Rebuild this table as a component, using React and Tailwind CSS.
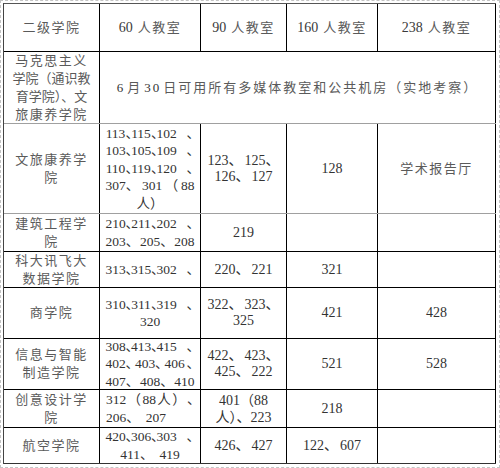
import React from "react";

const N = ({ children }) => <span className="inline-block w-[20px] text-center">{children}</span>;
const Cm = () => <span className="tracking-[-8px]">、</span>;
const Md = () => <span className="tracking-[-4px]">、</span>;
const End = () => <span className="inline-block w-[8px] tracking-[-5.5px]">、</span>;
const Sep = () => <span className="mr-[2px]">、</span>;

const L2 = ({ children }) => (
  <div className="w-[89px] flex justify-between items-baseline whitespace-nowrap">{children}</div>
);

const G = ({ a, b, c, m }) => (
  <L2>
    <span className="whitespace-nowrap">
      <N>{a}</N>{m ? <Md /> : <Cm />}<N>{b}</N>{m ? <Md /> : <Cm />}<N>{c}</N>
    </span>
    <End />
  </L2>
);

const Zh = ({ children }) => (
  <span className="text-[13px] tracking-[1.5px] text-[#5a5a5a]">{children}</span>
);

const c1 = "w-[96px] shrink-0 border-r border-black flex flex-col items-center justify-center text-[13px] leading-[18px] tracking-[1.5px] text-[#5a5a5a] whitespace-nowrap";
const c2 = "w-[101px] shrink-0 border-r border-black flex flex-col items-center justify-center text-[13.5px] leading-[17.5px] text-[#333]";
const c3 = "w-[86px] shrink-0 border-r border-black flex flex-col items-center justify-center text-[14px] leading-[16px] text-[#333] whitespace-nowrap";
const c4 = "w-[91px] shrink-0 border-r border-black flex flex-col items-center justify-center text-[14px] leading-[16px] text-[#333] whitespace-nowrap";
const c5 = "w-[118px] shrink-0 border-r border-black flex flex-col items-center justify-center text-[14px] leading-[16px] text-[#333] whitespace-nowrap";

export default function App() {
  return (
    <div className="w-[500px] h-[468px] bg-white border border-dashed border-[#c4c4c4] p-[2px] font-['Liberation_Serif','Noto_Sans_CJK_SC',serif]">
      <div className="w-[493px] border-l border-t border-l-[#444] border-t-[#555] flex flex-col">
        {/* header */}
        <div className="flex h-[48px] border-b border-black">
          <div className={c1}>二级学院</div>
          <div className={c2}>
            <div className="flex items-baseline whitespace-nowrap"><span className="text-[14px] text-[#3a3a3a]">60</span><span className="ml-[5px]"><Zh>人教室</Zh></span></div>
          </div>
          <div className={c3}>
            <div className="flex items-baseline whitespace-nowrap"><span className="text-[#3a3a3a]">90</span><span className="ml-[5px]"><Zh>人教室</Zh></span></div>
          </div>
          <div className={c4}>
            <div className="flex items-baseline whitespace-nowrap"><span className="text-[#3a3a3a]">160</span><span className="ml-[5px]"><Zh>人教室</Zh></span></div>
          </div>
          <div className={c5}>
            <div className="flex items-baseline whitespace-nowrap"><span className="text-[#3a3a3a]">238</span><span className="ml-[5px]"><Zh>人教室</Zh></span></div>
          </div>
        </div>

        {/* 马克思主义学院 */}
        <div className="flex h-[72px] border-b border-[#a0a0a0]">
          <div className={c1}>
            <div>马克思主义</div>
            <div className="tracking-[0px]">学院（通识教</div>
            <div className="tracking-[0px]">育学院）、文</div>
            <div>旅康养学院</div>
          </div>
          <div className="w-[396px] shrink-0 border-r border-black flex items-center justify-center text-[13px] tracking-[2px] text-[#5a5a5a] whitespace-nowrap">
            <span className="text-[#333]">6</span>
            <span className="ml-[2px]">月</span>
            <span className="ml-[2px] text-[#333]">30</span>
            <span className="ml-[2px]">日可用所有多媒体教室和公共机房（实地考察）</span>
          </div>
        </div>

        {/* 文旅康养学院 */}
        <div className="flex h-[90px] border-b border-[#a0a0a0]">
          <div className={c1}>
            <div>文旅康养学</div>
            <div>院</div>
          </div>
          <div className={c2}>
            <G a="113" b="115" c="102" />
            <G a="103" b="105" c="109" />
            <G a="110" b="119" c="120" />
            <L2><span>307、</span><span>301</span><span>（</span><span>88</span></L2>
            <div className="whitespace-nowrap">人）</div>
          </div>
          <div className={c3}>
            <div>123<Sep />125、</div>
            <div>126<Sep />127</div>
          </div>
          <div className={c4}>128</div>
          <div className={c5}><Zh>学术报告厅</Zh></div>
        </div>

        {/* 建筑工程学院 */}
        <div className="flex h-[38px] border-b border-black">
          <div className={c1}>
            <div>建筑工程学</div>
            <div>院</div>
          </div>
          <div className={c2}>
            <G a="210" b="211" c="202" />
            <L2><span>203、</span><span>205、</span><span>208</span></L2>
          </div>
          <div className={c3}>219</div>
          <div className={c4}></div>
          <div className={c5}></div>
        </div>

        {/* 科大讯飞大数据学院 */}
        <div className="flex h-[36px] border-b border-black">
          <div className={c1 + " leading-[16.5px]"}>
            <div>科大讯飞大</div>
            <div>数据学院</div>
          </div>
          <div className={c2}>
            <G a="313" b="315" c="302" />
          </div>
          <div className={c3}>
            <div>220<Sep />221</div>
          </div>
          <div className={c4}>321</div>
          <div className={c5}></div>
        </div>

        {/* 商学院 */}
        <div className="flex h-[51px] border-b border-black">
          <div className={c1}>商学院</div>
          <div className={c2}>
            <G a="310" b="311" c="319" />
            <div className="whitespace-nowrap">320</div>
          </div>
          <div className={c3}>
            <div>322<Sep />323、</div>
            <div>325</div>
          </div>
          <div className={c4}>421</div>
          <div className={c5}>428</div>
        </div>

        {/* 信息与智能制造学院 */}
        <div className="flex h-[51px] border-b border-black">
          <div className={c1 + " leading-[17px]"}>
            <div>信息与智能</div>
            <div>制造学院</div>
          </div>
          <div className={c2}>
            <G a="308" b="413" c="415" />
            <G a="402" b="403" c="406" m />
            <L2><span>407、</span><span>408、</span><span>410</span></L2>
          </div>
          <div className={c3}>
            <div>422<Sep />423、</div>
            <div>425<Sep />222</div>
          </div>
          <div className={c4}>521</div>
          <div className={c5}>528</div>
        </div>

        {/* 创意设计学院 */}
        <div className="flex h-[38px] border-b border-black">
          <div className={c1}>
            <div>创意设计学</div>
            <div>院</div>
          </div>
          <div className="w-[101px] shrink-0 border-r border-black flex flex-col items-start justify-center pl-[6px] text-[13.5px] leading-[17.5px] text-[#333]">
            <L2><span>312</span><span>（</span><span>88</span><span>人</span><span>）</span><End /></L2>
            <div className="whitespace-nowrap">206、<span className="ml-[6px]">207</span></div>
          </div>
          <div className={c3 + " leading-[17px]"}>
            <div>401（88</div>
            <div>人）、223</div>
          </div>
          <div className={c4}>218</div>
          <div className={c5}></div>
        </div>

        {/* 航空学院 */}
        <div className="flex h-[36px] border-b border-[#333]">
          <div className={c1}>航空学院</div>
          <div className={c2}>
            <G a="420" b="306" c="303" />
            <div className="whitespace-nowrap">411、<span className="ml-[6px]">419</span></div>
          </div>
          <div className={c3}>
            <div>426<Sep />427</div>
          </div>
          <div className={c4}>
            <div>122<Sep />607</div>
          </div>
          <div className={c5}></div>
        </div>
      </div>
    </div>
  );
}
